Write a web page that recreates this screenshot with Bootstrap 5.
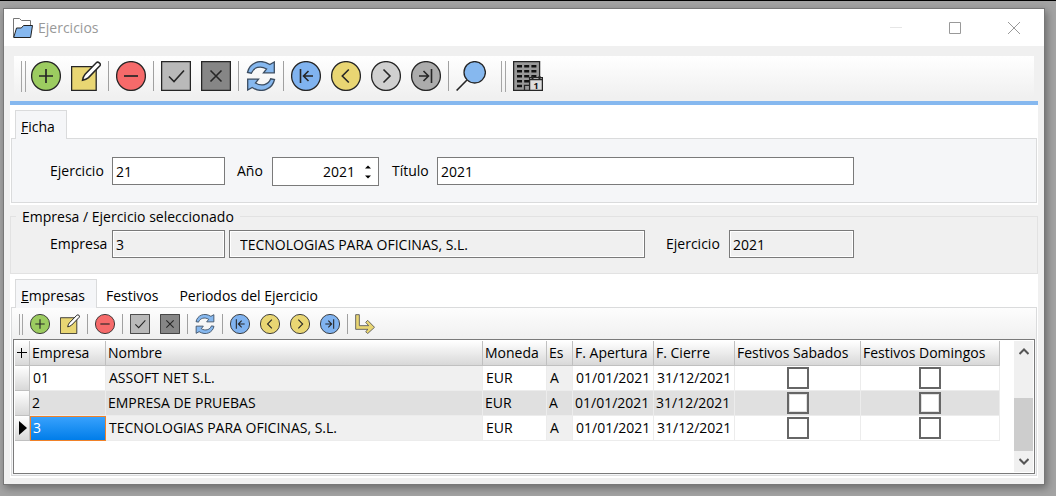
<!DOCTYPE html>
<html lang="es">
<head>
<meta charset="utf-8">
<meta name="viewport" content="width=device-width, initial-scale=1">
<title>Ejercicios</title>
<link href="https://cdn.jsdelivr.net/npm/bootstrap@5.3.0/dist/css/bootstrap.min.css" rel="stylesheet">
<style>
:root { --face: #f0f0f0; --edge: #dadbdc; --ink: #7a7a7a; --pane: #f5f6f8; --accent: #86b8ef; }
body { background: #a3a3a3; border-top: 1px solid #000; color: #000; font: 14px/20px "Open Sans", "Noto Sans", sans-serif; padding: 7px 11px 11px 3px; }
.win { background: var(--face); border: 1px solid #777; box-shadow: 2px 3px 8px rgba(0,0,0,.35); }
.win-title { height: 37px; padding: 0 1px 0 9px; color: #999; }
.win-title h1 { font-size: 14px; line-height: 20px; font-weight: 400; margin: 0 0 0 5px; }
.win-ctl { width: 59px; height: 36px; }
.win-ctl:first-child { color: #e6e6e6; }
button { background: none; border: 0; padding: 0; color: inherit; }
svg { display: block; }
symbol, .drawn { fill: none; stroke: #262626; stroke-width: 1.3px; }
.content-area { padding: 10px 6px 6px; }
.tools { height: 41px; margin: 0 4px 4px; padding: 0 0 1px 7px; background: linear-gradient(#fff, var(--face)); }
.tools button { width: 40px; height: 40px; }
.tools .split { width: 5px; height: 30px; }
.grip { width: 5px; height: 31px; border: solid #a5a5a5; border-width: 0 1px; }
.grip-next { margin: 0 2px 0 10px; }
.split { display: flex; justify-content: center; }
.split::before { content: ""; width: 1px; background: #a0a0a0; }
.tools-sm { height: 31px; padding: 1px 0 0 7px; background: linear-gradient(#fdfdfd, var(--face)); }
.tools-sm button { width: 30px; height: 30px; }
.tools-sm .split { width: 5px; height: 20px; }
.tools-sm .grip { width: 4px; height: 21px; margin-right: 2px; }
.sheet { background: #fff; padding: 5px 1px 2px; }
.sheet.top { border-top: 4px solid var(--accent); }
.tabs { padding-left: 4px; }
.tabs a { color: #000; text-decoration: none; padding: 7px 12px 0 9px; height: 28px; line-height: 20px; }
.tabs a.on { position: relative; background: var(--pane); border: 1px solid var(--edge); border-bottom: 0; padding: 6px 11px 0 5px; height: 29px; margin-bottom: -1px; }
.pane { border: 1px solid var(--edge); background: var(--pane); }
.form-line { padding: 18px 182px 16px 38px; }
.field { height: 28px; border: 1px solid var(--ink); background: #fff; padding: 0 3px; min-width: 0; color: #000; border-radius: 0; outline: 0; }
.field[readonly] { background: var(--face); box-shadow: inset 0 0 0 1px #fff; }
.field.name { padding-left: 10px; }
.w-code { width: 113px; }
.w-year { width: 125px; }
.tag { line-height: 28px; flex: none; }
.tag-1 { width: 62px; }
.tag-2 { width: 47px; padding-left: 12px; }
.tag-3 { width: 58px; padding-left: 13px; }
.tag-4 { width: 84px; padding-left: 21px; }
.spin { width: 107px; height: 29px; padding-right: 4px; }
.spin input { width: 79px; border: 0; outline: 0; padding: 0; text-align: right; appearance: textfield; color: #000; }
.spin input::-webkit-inner-spin-button { display: none; }
.spin button { width: 12px; height: 10px; }
fieldset { position: relative; padding: 25px 184px 16px 40px; }
fieldset::before { content: ""; position: absolute; inset: 11px 0 0; border: 1px solid #e2e2e2; pointer-events: none; }
legend { position: absolute; top: 0; left: 6px; width: auto; padding: 0 6px; margin: 0; font-size: 14px; line-height: 24px; background: var(--face); }
.grid-box { min-height: 134px; border: 1px solid var(--ink); background: #fff; margin: 0 1px 1px; padding: 1px; }
.grid-box table { table-layout: fixed; width: 100%; border-collapse: separate; border-spacing: 0; }
.grid-box th, .grid-box td { height: 25px; padding: 0 0 0 2px; font-weight: 400; line-height: 24px; white-space: nowrap; overflow: hidden; border: 0 solid #ececec; border-width: 0 1px 1px 0; }
.grid-box thead th, .grid-box tbody th { background: linear-gradient(#fff, #d8d8d8); border-color: #c0c0c0; }
.grid-box tbody th { padding: 0; }
.grid-box .inset-row td { padding-left: 3px; }
.grid-box td.locked { background: var(--face); }
.grid-box .alt td { background: #e0e0e0; }
.grid-box td.picked { background: linear-gradient(#3aa3fd, #007de9); color: #fff; outline: 1px solid #f08128; outline-offset: -1px; }
.tick { appearance: none; display: block; width: 22px; height: 22px; margin: 0 auto; border: 2px solid #666; background: #fff; }
.alt .tick { box-shadow: inset 0 0 0 1px #e0e0e0; }
.vbar { width: 21px; margin-left: 14px; background: var(--face); color: #555; }
.vbar button { height: 21px; width: 19px; }
.vbar .thumb { height: 53px; width: 19px; background: #cdcdcd; }
</style>
</head>
<body class="min-vh-100 d-flex flex-column">
<svg width="0" height="0" class="position-absolute">
  <symbol id="add" viewBox="0 0 30 30"><circle cx="15" cy="15" r="14.4" fill="#9ccc60"/><path d="M8 15h14M15 8v14" stroke-width="1.7"/></symbol>
  <symbol id="edit" viewBox="0 0 30 30"><path d="M.6 5.6h24.6v23.8H.6z" fill="#e9d673"/><path d="M11.5 19.3c.3-2 1.2-4.300 2.600-6L25.300 1.800c1.600-1.700 5.200.8 3.600 3L17.500 16.600c-1.600 1.400-3.700 2.300-6 2.700z" fill="#fff" stroke-width="1.500"/></symbol>
  <symbol id="del" viewBox="0 0 30 30"><circle cx="15" cy="15" r="14.4" fill="#f66a6a"/><path d="M8 15h14" stroke-width="1.7"/></symbol>
  <symbol id="ok" viewBox="0 0 30 30"><path d="M.6.6h28.800v28.800H.6z" fill="#b9b9b9"/><path d="M8 15.500l5 5L23 9.500" stroke-width="1.600"/></symbol>
  <symbol id="cancel" viewBox="0 0 30 30"><path d="M.6.6h28.800v28.800H.6z" fill="#868686"/><path d="M9.500 9.500l11 11M20.500 9.500l-11 11" stroke-width="1.600"/></symbol>
  <symbol id="sync" viewBox="0 0 30 30"><path d="M1.500 11.500C3.500 2 14-2.800 23.800 3.500L28.300 1v10.800H17.500L20.600 8C14.500 4.200 7.500 6.200 5.300 12.200z" fill="#86b8ef" stroke="#3b4c60"/><path d="M28.500 18.500C26.500 28 16 32.800 6.200 26.500L1.700 29V18.200h10.800L9.400 22c6.100 3.800 13.100 1.800 15.300-4.200z" fill="#86b8ef" stroke="#3b4c60"/></symbol>
  <symbol id="first" viewBox="0 0 30 30"><circle cx="15" cy="15" r="14.4" fill="#80b3f0"/><path d="M9.500 8v14M22 15h-9M17.500 10l-5 5 5 5" stroke-width="1.600"/></symbol>
  <symbol id="prev" viewBox="0 0 30 30"><circle cx="15" cy="15" r="14.4" fill="#e9d673"/><path d="M17.800 8.500L11.300 15l6.500 6.500" stroke-width="1.600"/></symbol>
  <symbol id="next-off" viewBox="0 0 30 30"><circle cx="15" cy="15" r="14.4" fill="#d0d0d0"/><path d="M12.500 8.500L19 15l-6.500 6.500" stroke-width="1.600"/></symbol>
  <symbol id="next-on" viewBox="0 0 30 30"><circle cx="15" cy="15" r="14.4" fill="#e9d673"/><path d="M12.500 8.500L19 15l-6.500 6.500" stroke-width="1.600"/></symbol>
  <symbol id="last-off" viewBox="0 0 30 30"><circle cx="15" cy="15" r="14.4" fill="#acacac"/><path d="M20.500 8v14M8 15h9M12.500 10l5 5-5 5" stroke-width="1.600"/></symbol>
  <symbol id="last-on" viewBox="0 0 30 30"><circle cx="15" cy="15" r="14.4" fill="#80b3f0"/><path d="M20.500 8v14M8 15h9M12.500 10l5 5-5 5" stroke-width="1.600"/></symbol>
  <symbol id="find" viewBox="0 0 30 30"><circle cx="18.700" cy="11.300" r="10.700" fill="#86b8ef"/><path d="M11 19L.6 29.500" stroke-width="1.600"/></symbol>
  <symbol id="branch" viewBox="0 0 30 30"><path d="M1 1h5.500v16.500h14L16 12.500 19 9.500 29.300 20 19 29.300 16 26.500 19.500 23H1z" fill="#e9d673" stroke="#555"/></symbol>
</svg>

<main class="win d-flex flex-column flex-grow-1">
  <header class="win-title bg-white d-flex align-items-center">
    <svg width="20" height="20" viewBox="0 0 20 20" stroke="#222"><path d="M.5 19V.5h6l2 2H17.500v6" fill="#fff" stroke="#777"/><path d="M.7 19.500L3.500 10h4.800l2.200-2.500h9L17.600 19.500z" fill="#86b8ef"/></svg>
    <h1>Ejercicios</h1>
    <div class="ms-auto d-flex">
      <button class="win-ctl" aria-label="Minimizar"><svg class="mx-auto" width="12" height="12" stroke="currentColor"><path d="M0 5.500h12"/></svg></button>
      <button class="win-ctl" aria-label="Maximizar"><svg class="mx-auto" width="12" height="12" fill="none" stroke="currentColor"><path d="M.5.5h11v11H.5z"/></svg></button>
      <button class="win-ctl" aria-label="Cerrar"><svg class="mx-auto" width="12" height="12" stroke="currentColor"><path d="M0 0l12 12M12 0L0 12"/></svg></button>
    </div>
  </header>

  <div class="content-area d-flex flex-column flex-grow-1">
    <div class="tools d-flex align-items-center" role="toolbar" aria-label="Ejercicios">
      <span class="grip"></span>
      <button aria-label="Nuevo"><svg class="mx-auto" width="30" height="30"><use href="#add"/></svg></button>
      <button aria-label="Editar"><svg class="mx-auto" width="30" height="30"><use href="#edit"/></svg></button>
      <span class="split"></span>
      <button aria-label="Borrar"><svg class="mx-auto" width="30" height="30"><use href="#del"/></svg></button>
      <span class="split"></span>
      <button aria-label="Aceptar"><svg class="mx-auto" width="30" height="30"><use href="#ok"/></svg></button>
      <button aria-label="Cancelar"><svg class="mx-auto" width="30" height="30"><use href="#cancel"/></svg></button>
      <span class="split"></span>
      <button aria-label="Refrescar"><svg class="mx-auto" width="30" height="30"><use href="#sync"/></svg></button>
      <span class="split"></span>
      <button aria-label="Primero"><svg class="mx-auto" width="30" height="30"><use href="#first"/></svg></button>
      <button aria-label="Anterior"><svg class="mx-auto" width="30" height="30"><use href="#prev"/></svg></button>
      <button aria-label="Siguiente"><svg class="mx-auto" width="30" height="30"><use href="#next-off"/></svg></button>
      <button aria-label="Último"><svg class="mx-auto" width="30" height="30"><use href="#last-off"/></svg></button>
      <span class="split"></span>
      <button aria-label="Buscar"><svg class="mx-auto" width="30" height="30"><use href="#find"/></svg></button>
      <span class="grip grip-next"></span>
      <button aria-label="Empresas del ejercicio"><svg class="mx-auto drawn" width="30" height="30" viewBox="0 0 30 30"><path d="M.6.6h26v28.800H.6z" fill="#999"/><path d="M4 5.300h19.500M4 10.300h19.500M4 15.300h19.500M4 20.200h12M4 25h5" stroke="#111" stroke-width="2.600" stroke-dasharray="5 2.200"/><path d="M11.500 29.400v-5H16"/><path d="M16.600 18.600h12.800v10.800H16.600zM16.600 18.600v-2h12.800v2" fill="#ddd"/><path d="M19.500 15v3M26.500 15v3" stroke-width="2"/><text x="23" y="28" text-anchor="middle" font-weight="700" font-size="9" fill="#111" stroke="none">1</text></svg></button>
    </div>

    <section class="sheet top">
      <nav class="tabs d-flex"><a class="on" href="#ficha"><u>F</u>icha</a></nav>
      <div class="pane" id="ficha">
        <form class="form-line d-flex align-items-start">
          <label class="tag tag-1" for="ej">Ejercicio</label>
          <input class="field w-code" id="ej" value="21">
          <label class="tag tag-2" for="anio">Año</label>
          <div class="field spin d-flex align-items-center justify-content-between">
            <input type="number" id="anio" value="2021">
            <div class="d-flex flex-column">
              <button type="button" aria-label="Subir"><svg class="mx-auto" width="6" height="4"><path d="M0 3.500L3 .5l3 3z"/></svg></button>
              <button type="button" aria-label="Bajar"><svg class="mx-auto" width="6" height="4"><path d="M0 .5l3 3 3-3z"/></svg></button>
            </div>
          </div>
          <label class="tag tag-3" for="tit">Título</label>
          <input class="field flex-grow-1" id="tit" value="2021">
        </form>
      </div>
    </section>

    <fieldset>
      <legend>Empresa / Ejercicio seleccionado</legend>
      <div class="d-flex align-items-start">
        <label class="tag tag-1" for="emp">Empresa</label>
        <input class="field w-code" id="emp" value="3" readonly>
        <input class="field name flex-grow-1 ms-1" aria-label="Nombre de la empresa" value="TECNOLOGIAS PARA OFICINAS, S.L." readonly>
        <label class="tag tag-4" for="ejsel">Ejercicio</label>
        <input class="field w-year" id="ejsel" value="2021" readonly>
      </div>
    </fieldset>

    <section class="sheet d-flex flex-column flex-grow-1">
      <nav class="tabs d-flex">
        <a class="on" href="#empresas"><u>E</u>mpresas</a>
        <a href="#festivos">Festivos</a>
        <a href="#periodos">Periodos del Ejercicio</a>
      </nav>
      <div class="pane d-flex flex-column flex-grow-1" id="empresas">
        <div class="tools-sm d-flex align-items-center" role="toolbar" aria-label="Empresas">
          <span class="grip"></span>
          <button aria-label="Nuevo"><svg class="mx-auto" width="20" height="20"><use href="#add"/></svg></button>
          <button aria-label="Editar"><svg class="mx-auto" width="20" height="20"><use href="#edit"/></svg></button>
          <span class="split"></span>
          <button aria-label="Borrar"><svg class="mx-auto" width="20" height="20"><use href="#del"/></svg></button>
          <span class="split"></span>
          <button aria-label="Aceptar"><svg class="mx-auto" width="20" height="20"><use href="#ok"/></svg></button>
          <button aria-label="Cancelar"><svg class="mx-auto" width="20" height="20"><use href="#cancel"/></svg></button>
          <span class="split"></span>
          <button aria-label="Refrescar"><svg class="mx-auto" width="20" height="20"><use href="#sync"/></svg></button>
          <span class="split"></span>
          <button aria-label="Primero"><svg class="mx-auto" width="20" height="20"><use href="#first"/></svg></button>
          <button aria-label="Anterior"><svg class="mx-auto" width="20" height="20"><use href="#prev"/></svg></button>
          <button aria-label="Siguiente"><svg class="mx-auto" width="20" height="20"><use href="#next-on"/></svg></button>
          <button aria-label="Último"><svg class="mx-auto" width="20" height="20"><use href="#last-on"/></svg></button>
          <span class="split"></span>
          <button aria-label="Ir al detalle"><svg class="mx-auto" width="20" height="20"><use href="#branch"/></svg></button>
        </div>
        <div class="grid-box d-flex flex-grow-1">
          <div class="flex-grow-1">
            <table>
              <colgroup><col width="15"><col width="76"><col><col width="64"><col width="26"><col width="81"><col width="81"><col width="126"><col width="139"></colgroup>
              <thead><tr><th class="p-0"><svg class="mx-auto" width="10" height="10" stroke="#000"><path d="M0 4.500h10M4.500 0v10"/></svg></th><th>Empresa</th><th>Nombre</th><th>Moneda</th><th>Es</th><th>F. Apertura</th><th>F. Cierre</th><th>Festivos Sabados</th><th>Festivos Domingos</th></tr></thead>
              <tbody>
                <tr class="inset-row"><th></th><td>01</td><td class="locked">ASSOFT NET S.L.</td><td>EUR</td><td class="locked">A</td><td>01/01/2021</td><td>31/12/2021</td><td class="p-0"><input class="tick" type="checkbox" aria-label="Festivos Sabados, 01"></td><td class="p-0"><input class="tick" type="checkbox" aria-label="Festivos Domingos, 01"></td></tr>
                <tr class="alt"><th></th><td>2</td><td>EMPRESA DE PRUEBAS</td><td>EUR</td><td>A</td><td>01/01/2021</td><td>31/12/2021</td><td class="p-0"><input class="tick" type="checkbox" aria-label="Festivos Sabados, 2"></td><td class="p-0"><input class="tick" type="checkbox" aria-label="Festivos Domingos, 2"></td></tr>
                <tr class="inset-row"><th><svg class="ms-1" width="8" height="14"><path d="M0 0l8 7-8 7z"/></svg></th><td class="picked">3</td><td class="locked">TECNOLOGIAS PARA OFICINAS, S.L.</td><td>EUR</td><td class="locked">A</td><td>01/01/2021</td><td>31/12/2021</td><td class="p-0"><input class="tick" type="checkbox" aria-label="Festivos Sabados, 3"></td><td class="p-0"><input class="tick" type="checkbox" aria-label="Festivos Domingos, 3"></td></tr>
              </tbody>
            </table>
          </div>
          <div class="vbar d-flex flex-column">
            <button aria-label="Subir"><svg class="mx-auto" width="10" height="7" fill="none" stroke="currentColor" stroke-width="2"><path d="M.5 6L5 1.500 9.500 6"/></svg></button>
            <div class="thumb mt-auto"></div>
            <button aria-label="Bajar"><svg class="mx-auto" width="10" height="7" fill="none" stroke="currentColor" stroke-width="2"><path d="M.5 1L5 5.500 9.500 1"/></svg></button>
          </div>
        </div>
      </div>
    </section>
  </div>
</main>
<script src="https://cdn.jsdelivr.net/npm/bootstrap@5.3.0/dist/js/bootstrap.bundle.min.js"></script>
</body>
</html>
